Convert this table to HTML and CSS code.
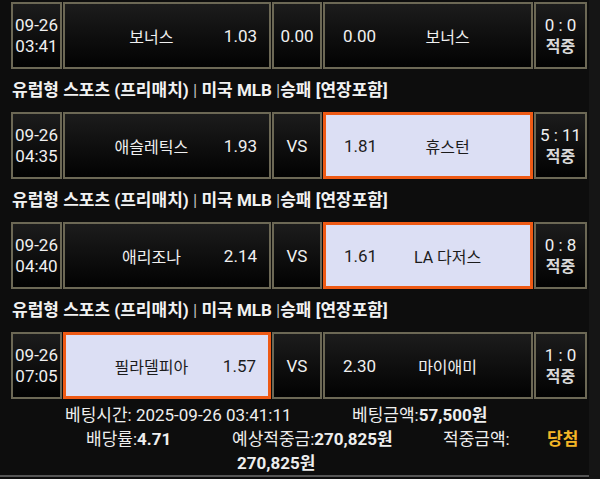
FILE: index.html
```html
<!DOCTYPE html>
<html lang="ko">
<head>
<meta charset="utf-8">
<link rel="stylesheet" href="styles.css">
</head>
<body>
<div class="main">
  <div class="list">
    <div class="row">
      <div class="cell time"><span>09-26</span><span>03:41</span></div>
      <div class="cell team home"><span class="name">보너스</span><span class="odd">1.03</span></div>
      <div class="cell mid">0.00</div>
      <div class="cell team away"><span class="odd">0.00</span><span class="name">보너스</span></div>
      <div class="cell score"><span>0 : 0</span><span class="res">적중</span></div>
    </div>
    <div class="league">유럽형 스포츠 (프리매치) <span class="sep">|</span> 미국 MLB <span class="sep">|</span>승패 [연장포함]</div>
    <div class="row">
      <div class="cell time"><span>09-26</span><span>04:35</span></div>
      <div class="cell team home"><span class="name">애슬레틱스</span><span class="odd">1.93</span></div>
      <div class="cell mid">VS</div>
      <div class="cell team away pick"><span class="odd">1.81</span><span class="name">휴스턴</span></div>
      <div class="cell score"><span>5 : 11</span><span class="res">적중</span></div>
    </div>
    <div class="league">유럽형 스포츠 (프리매치) <span class="sep">|</span> 미국 MLB <span class="sep">|</span>승패 [연장포함]</div>
    <div class="row">
      <div class="cell time"><span>09-26</span><span>04:40</span></div>
      <div class="cell team home"><span class="name">애리조나</span><span class="odd">2.14</span></div>
      <div class="cell mid">VS</div>
      <div class="cell team away pick"><span class="odd">1.61</span><span class="name">LA 다저스</span></div>
      <div class="cell score"><span>0 : 8</span><span class="res">적중</span></div>
    </div>
    <div class="league">유럽형 스포츠 (프리매치) <span class="sep">|</span> 미국 MLB <span class="sep">|</span>승패 [연장포함]</div>
    <div class="row">
      <div class="cell time"><span>09-26</span><span>07:05</span></div>
      <div class="cell team home pick"><span class="name">필라델피아</span><span class="odd">1.57</span></div>
      <div class="cell mid">VS</div>
      <div class="cell team away"><span class="odd">2.30</span><span class="name">마이애미</span></div>
      <div class="cell score"><span>1 : 0</span><span class="res">적중</span></div>
    </div>
  </div>
  <div class="summary">
    <div class="line l1">
      <span>베팅시간: 2025-09-26 03:41:11</span>
      <span>베팅금액:<b>57,500원</b></span>
    </div>
    <div class="line l2">
      <span>배당률:<b>4.71</b></span>
      <span>예상적중금:<b>270,825원</b></span>
      <span>적중금액:</span>
      <span class="win">당첨</span>
    </div>
    <div class="line l3">
      <span><b>270,825원</b></span>
    </div>
  </div>
</div>
<div class="scrollbar"></div>
</body>
</html>
```
FILE: styles.css
```css
* { box-sizing: border-box; margin: 0; padding: 0; }
html, body { width: 600px; height: 479px; overflow: hidden; }
body {
  background: #0d0d0d;
  font-family: Roboto, "Noto Sans CJK KR", sans-serif;
  color: #f0f0f0;
  display: flex;
}
.main { width: 589px; padding-top: 2px; }
.scrollbar { flex: 1; background: #151515; }
.list { padding-left: 11px; }
.row { display: flex; gap: 1px; height: 67px; }
.cell {
  border: 2px solid #6c6855;
  background: linear-gradient(#1c1c1c, #020202);
  display: flex;
  align-items: center;
}
.time {
  width: 51px;
  flex-direction: column;
  justify-content: center;
  font-size: 17px;
  line-height: 21px;
}
.team { width: 208px; }
.home { padding: 0 12px 0 14px; }
.away { width: 210px; padding: 0 12px 0 18px; }
.mid { width: 50px; justify-content: center; font-size: 17px; }
.score {
  width: 53px;
  flex-direction: column;
  justify-content: center;
  font-size: 17px;
  line-height: 21px;
}
.res { font-size: 16px; font-weight: 700; color: #d9d9d9; }
.name { flex: 1; text-align: center; font-size: 16px; }
.odd { font-size: 17px; }
.pick {
  border: 3px solid #ee5a15;
  background: #dcdff4;
  color: #1c1c1c;
}
.league {
  height: 43px;
  line-height: 43px;
  font-size: 17px;
  font-weight: 700;
  color: #f2f2f2;
  padding-left: 1px;
  white-space: nowrap;
}
.sep { font-weight: 400; color: #bdbdbd; }
.summary {
  padding-top: 4px;
  border-bottom: 2px solid #555;
  font-size: 17px;
  line-height: 24px;
  color: #eeeeee;
  height: 78px;
}
.line { display: grid; white-space: nowrap; }
.l1 { padding-left: 65px; grid-template-columns: 287px auto; }
.l2 { padding-left: 86px; grid-template-columns: 146px 211px 104px auto; }
.l3 { padding-left: 237px; }
b { font-weight: 700; }
.win { color: #f3b526; font-weight: 700; }
```
